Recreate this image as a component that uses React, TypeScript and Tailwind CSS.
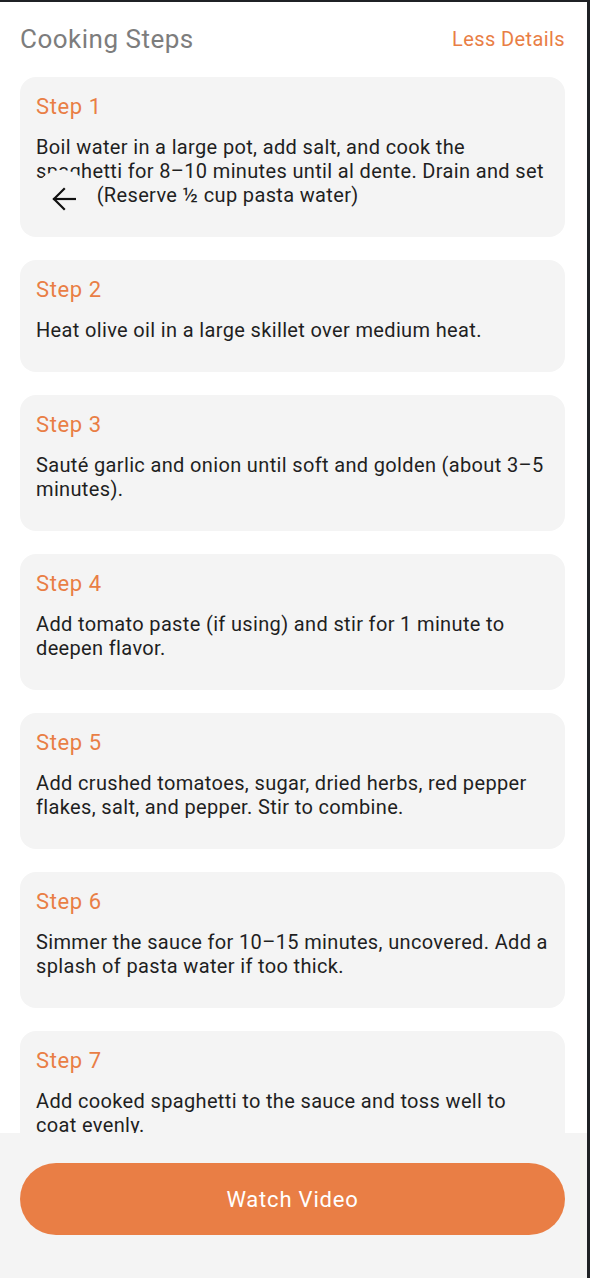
import React from 'react';

const steps = [
  'Boil water in a large pot, add salt, and cook the spaghetti for 8–10 minutes until al dente. Drain and set aside. (Reserve ½ cup pasta water)',
  'Heat olive oil in a large skillet over medium heat.',
  'Sauté garlic and onion until soft and golden (about 3–5 minutes).',
  'Add tomato paste (if using) and stir for 1 minute to deepen flavor.',
  'Add crushed tomatoes, sugar, dried herbs, red pepper flakes, salt, and pepper. Stir to combine.',
  'Simmer the sauce for 10–15 minutes, uncovered. Add a splash of pasta water if too thick.',
  'Add cooked spaghetti to the sauce and toss well to coat evenly.',
  'Serve hot, topped with grated parmesan and fresh basil.',
];

// floating back button that sits over the first card
const BackButton = () => (
  <div className="absolute left-[13px] top-[93px] w-[58px] h-[58px] rounded-full bg-[#f4f4f4] flex items-center justify-center">
    <svg width="25" height="24" viewBox="0 0 25 24" fill="none" stroke="#111" strokeWidth="2.2" strokeLinecap="square" className="ml-[2px]">
      <path d="M3 12H24" />
      <path d="M13 2L3 12L13 22" />
    </svg>
  </div>
);

export default function App() {
  return (
    <div
      className="w-[590px] h-[1278px] flex flex-col bg-white border-t-2 border-r-[3px] border-[#1f2125] overflow-hidden"
      style={{ fontFamily: 'Roboto, "Noto Sans", sans-serif' }}
    >
      <div className="flex-1 overflow-hidden pl-5 pr-[22px] pt-[21px]">
        <div className="flex items-center justify-between h-8 mb-[22px]">
          <h1 className="text-[26px] tracking-[0.5px] text-[#7d7d7d] leading-8">Cooking Steps</h1>
          <button className="text-[20px] tracking-[0.4px] text-[#e97e45] leading-8">Less Details</button>
        </div>

        <div className="flex flex-col gap-[23px]">
          {steps.map((text, i) => (
            <div key={i} className="relative bg-[#f4f4f4] rounded-2xl px-4 pt-4 pb-[30px]">
              <h2 className="text-[22px] tracking-[0.6px] leading-7 text-[#e97e45]">Step {i + 1}</h2>
              <p className="mt-[14px] text-[20px] tracking-[0.35px] leading-6 text-[#1f1f1f]">{text}</p>
              {i === 0 && <BackButton />}
            </div>
          ))}
        </div>
      </div>

      <div className="bg-[#f4f4f4] pl-5 pr-[22px] pt-[30px] pb-[43px]">
        <button className="w-full h-[72px] rounded-full bg-[#e97e45] text-white text-[22px] tracking-[0.8px]">
          Watch Video
        </button>
      </div>
    </div>
  );
}
